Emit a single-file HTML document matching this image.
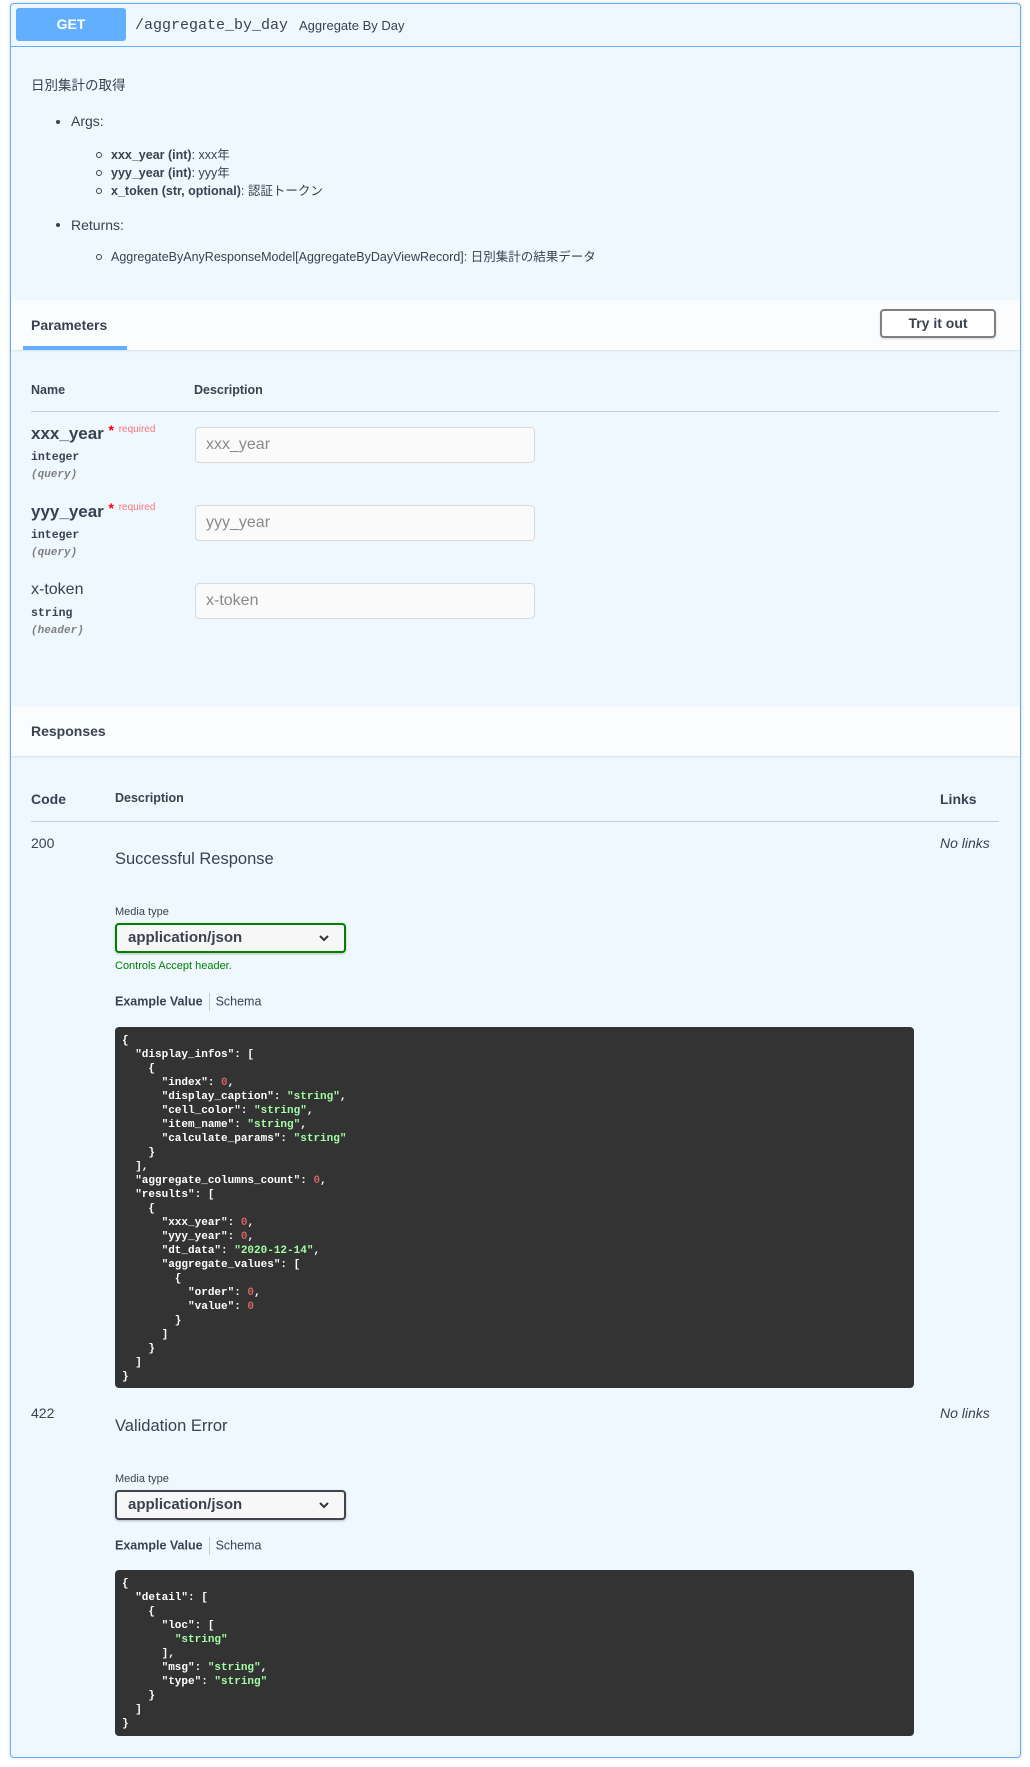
<!DOCTYPE html>
<html><head><meta charset="utf-8">
<style>
*{margin:0;padding:0;box-sizing:border-box}
body{width:1030px;height:1767px;background:#fff;position:relative;font-family:"Liberation Sans","Noto Sans CJK JP",sans-serif;color:#3b4151;overflow:hidden}
.a{position:absolute;white-space:nowrap}
#box{position:absolute;left:10px;top:3px;width:1011px;height:1755px;border:1px solid #61affe;border-radius:4px;background:#eff7ff;box-shadow:0 0 3px rgba(0,0,0,.19)}
.band{position:absolute;left:11px;width:1009px;background:#fafcfe;box-shadow:0 1px 2px rgba(0,0,0,.1)}
.mono{font-family:"Liberation Mono",monospace}
.inp{position:absolute;left:195px;width:340px;height:36px;border:1px solid #d9d9d9;border-radius:4px;background:#fafafa;font-size:16px;color:#8a8a8a;padding-left:10px;line-height:34px}
.sel{position:absolute;left:115px;width:231px;height:30px;border:2px solid #41444e;border-radius:4px;background:#f7f7f7;box-shadow:0 1px 2px rgba(0,0,0,.25);font-size:15px;font-weight:bold;padding-left:11px;line-height:26px}
.sel svg{position:absolute;right:14px;top:9px}
pre{position:absolute;left:115px;width:799px;background:#333;border-radius:4px;color:#fff;font-family:"Liberation Mono",monospace;font-weight:bold;font-size:11px;line-height:14px;padding:7px 7px}
.s{color:#a2fca2}.n{color:#d36363}
.li{font-size:12.5px}
.dot{position:absolute;width:4px;height:4px;border-radius:50%;background:#3b4151}
.circ{position:absolute;width:6px;height:6px;border-radius:50%;border:1px solid #3b4151}
</style></head><body>
<div id="box"></div>
<div class="a" style="left:16px;top:8px;width:110px;height:33px;background:#61affe;border-radius:3px;color:#fff;font-weight:bold;font-size:14px;text-align:center;line-height:33px">GET</div>
<div class="a mono" style="left:135px;top:15px;font-size:15px;line-height:22px;color:#3b4151">/aggregate_by_day</div>
<div class="a" style="left:299px;top:17px;font-size:13px;line-height:18px">Aggregate By Day</div>
<div class="a" style="left:11px;top:46px;width:1009px;height:1px;background:#61affe"></div>
<div class="a" style="left:31px;top:77px;font-size:13.5px;line-height:18px">日別集計の取得</div>
<div class="dot" style="left:56px;top:120px"></div>
<div class="a" style="left:71px;top:112px;font-size:14px;line-height:18px">Args:</div>
<div class="circ" style="left:96px;top:152px"></div>
<div class="a li" style="left:111px;top:147px;line-height:16px"><b>xxx_year (int)</b>: xxx年</div>
<div class="circ" style="left:96px;top:170px"></div>
<div class="a li" style="left:111px;top:165px;line-height:16px"><b>yyy_year (int)</b>: yyy年</div>
<div class="circ" style="left:96px;top:188px"></div>
<div class="a li" style="left:111px;top:183px;line-height:16px"><b>x_token (str, optional)</b>: 認証トークン</div>
<div class="dot" style="left:56px;top:223px"></div>
<div class="a" style="left:71px;top:216px;font-size:14px;line-height:18px">Returns:</div>
<div class="circ" style="left:96px;top:254px"></div>
<div class="a" style="left:111px;top:249px;font-size:12.5px;line-height:16px">AggregateByAnyResponseModel[AggregateByDayViewRecord]: 日別集計の結果データ</div>
<div class="band" style="top:300px;height:50px"></div>
<div class="a" style="left:31px;top:316px;font-size:14px;font-weight:bold;line-height:18px">Parameters</div>
<div class="a" style="left:23px;top:346px;width:104px;height:4px;background:#61affe"></div>
<div class="a" style="left:880px;top:309px;width:116px;height:29px;border:2px solid #808080;border-radius:4px;background:#fff;box-shadow:0 1px 2px rgba(0,0,0,.15);font-size:14px;font-weight:bold;text-align:center;line-height:25px">Try it out</div>
<div class="a" style="left:31px;top:382px;font-size:12.5px;font-weight:bold;line-height:16px">Name</div>
<div class="a" style="left:194px;top:382px;font-size:12.5px;font-weight:bold;line-height:16px">Description</div>
<div class="a" style="left:31px;top:411px;width:968px;height:1px;background:#c8ccd3"></div>
<div class="a" style="left:31px;top:424px;font-size:17px;font-weight:bold;line-height:20px">xxx_year <span style="color:#f00;font-size:14px;position:relative;top:-4px">*</span> <span style="color:#f93e3e;font-size:10px;font-weight:normal;position:relative;top:-7px;opacity:.7">required</span></div>
<div class="a mono" style="left:31px;top:451px;font-size:11.5px;font-weight:bold;line-height:14px">integer</div>
<div class="a mono" style="left:31px;top:468px;font-size:11px;font-weight:bold;font-style:italic;color:#808080;line-height:14px">(query)</div>
<div class="inp" style="top:427px">xxx_year</div>
<div class="a" style="left:31px;top:502px;font-size:17px;font-weight:bold;line-height:20px">yyy_year <span style="color:#f00;font-size:14px;position:relative;top:-4px">*</span> <span style="color:#f93e3e;font-size:10px;font-weight:normal;position:relative;top:-7px;opacity:.7">required</span></div>
<div class="a mono" style="left:31px;top:529px;font-size:11.5px;font-weight:bold;line-height:14px">integer</div>
<div class="a mono" style="left:31px;top:546px;font-size:11px;font-weight:bold;font-style:italic;color:#808080;line-height:14px">(query)</div>
<div class="inp" style="top:505px">yyy_year</div>
<div class="a" style="left:31px;top:580px;font-size:16px;line-height:20px">x-token</div>
<div class="a mono" style="left:31px;top:607px;font-size:11.5px;font-weight:bold;line-height:14px">string</div>
<div class="a mono" style="left:31px;top:624px;font-size:11px;font-weight:bold;font-style:italic;color:#808080;line-height:14px">(header)</div>
<div class="inp" style="top:583px">x-token</div>
<div class="band" style="top:706px;height:50px"></div>
<div class="a" style="left:31px;top:722px;font-size:14px;font-weight:bold;line-height:18px">Responses</div>
<div class="a" style="left:31px;top:790px;font-size:14px;font-weight:bold;line-height:18px">Code</div>
<div class="a" style="left:115px;top:790px;font-size:12.5px;font-weight:bold;line-height:16px">Description</div>
<div class="a" style="left:940px;top:790px;font-size:14px;font-weight:bold;line-height:18px">Links</div>
<div class="a" style="left:31px;top:821px;width:968px;height:1px;background:#c8ccd3"></div>
<div class="a" style="left:31px;top:834px;font-size:14px;line-height:18px">200</div>
<div class="a" style="left:940px;top:834px;font-size:14px;font-style:italic;line-height:18px">No links</div>
<div class="a" style="left:115px;top:849px;font-size:16.5px;line-height:20px">Successful Response</div>
<div class="a" style="left:115px;top:905px;font-size:11px;line-height:14px">Media type</div>
<div class="sel" style="top:923px;border-color:#008000">application/json<svg width="12" height="8" viewBox="0 0 12 8"><path d="M2 2l4 4 4-4" stroke="#333" stroke-width="2" fill="none"/></svg></div>
<div class="a" style="left:115px;top:959px;font-size:11px;color:#008000;line-height:14px">Controls Accept header.</div>
<div class="a" style="left:115px;top:993px;font-size:12.5px;line-height:16px"><b>Example Value</b><span style="display:inline-block;width:1px;height:18px;background:#ccc;margin:0 6px;vertical-align:middle"></span>Schema</div>
<pre style="top:1027px;height:361px">{
  "display_infos": [
    {
      "index": <span class="n">0</span>,
      "display_caption": <span class="s">"string"</span>,
      "cell_color": <span class="s">"string"</span>,
      "item_name": <span class="s">"string"</span>,
      "calculate_params": <span class="s">"string"</span>
    }
  ],
  "aggregate_columns_count": <span class="n">0</span>,
  "results": [
    {
      "xxx_year": <span class="n">0</span>,
      "yyy_year": <span class="n">0</span>,
      "dt_data": <span class="s">"2020-12-14"</span>,
      "aggregate_values": [
        {
          "order": <span class="n">0</span>,
          "value": <span class="n">0</span>
        }
      ]
    }
  ]
}</pre>
<div class="a" style="left:31px;top:1404px;font-size:14px;line-height:18px">422</div>
<div class="a" style="left:940px;top:1404px;font-size:14px;font-style:italic;line-height:18px">No links</div>
<div class="a" style="left:115px;top:1416px;font-size:16.5px;line-height:20px">Validation Error</div>
<div class="a" style="left:115px;top:1472px;font-size:11px;line-height:14px">Media type</div>
<div class="sel" style="top:1490px">application/json<svg width="12" height="8" viewBox="0 0 12 8"><path d="M2 2l4 4 4-4" stroke="#333" stroke-width="2" fill="none"/></svg></div>
<div class="a" style="left:115px;top:1537px;font-size:12.5px;line-height:16px"><b>Example Value</b><span style="display:inline-block;width:1px;height:18px;background:#ccc;margin:0 6px;vertical-align:middle"></span>Schema</div>
<pre style="top:1570px;height:166px">{
  "detail": [
    {
      "loc": [
        <span class="s">"string"</span>
      ],
      "msg": <span class="s">"string"</span>,
      "type": <span class="s">"string"</span>
    }
  ]
}</pre>
</body></html>
